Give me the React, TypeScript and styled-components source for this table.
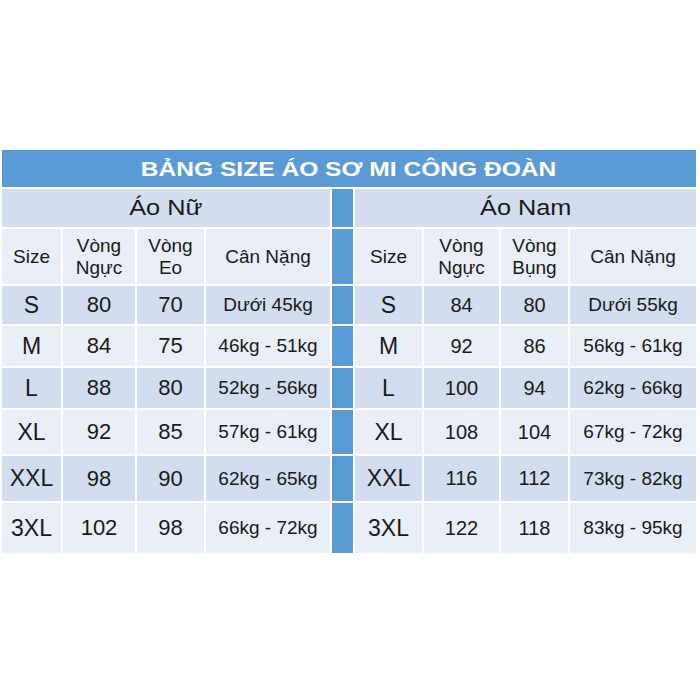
import React from 'react';
import styled, { createGlobalStyle } from 'styled-components';

type Tone = 'title' | 'dark' | 'light' | 'rule';

interface Row {
	size: string;
	chest: string;
	waist: string;
	weight: string;
}

const women: Row[] = [
	{ size: 'S', chest: '80', waist: '70', weight: 'Dưới 45kg' },
	{ size: 'M', chest: '84', waist: '75', weight: '46kg - 51kg' },
	{ size: 'L', chest: '88', waist: '80', weight: '52kg - 56kg' },
	{ size: 'XL', chest: '92', waist: '85', weight: '57kg - 61kg' },
	{ size: 'XXL', chest: '98', waist: '90', weight: '62kg - 65kg' },
	{ size: '3XL', chest: '102', waist: '98', weight: '66kg - 72kg' },
];

const men: Row[] = [
	{ size: 'S', chest: '84', waist: '80', weight: 'Dưới 55kg' },
	{ size: 'M', chest: '92', waist: '86', weight: '56kg - 61kg' },
	{ size: 'L', chest: '100', waist: '94', weight: '62kg - 66kg' },
	{ size: 'XL', chest: '108', waist: '104', weight: '67kg - 72kg' },
	{ size: 'XXL', chest: '116', waist: '112', weight: '73kg - 82kg' },
	{ size: '3XL', chest: '122', waist: '118', weight: '83kg - 95kg' },
];

export default function App() {
	return (
		<>
			<GlobalStyle />
			<Page>
				<Sheet>
					<Cell $tone='title' $span={9}>
						<TitleText>BẢNG SIZE ÁO SƠ MI CÔNG ĐOÀN</TitleText>
					</Cell>

					<Cell $tone='dark' $span={4}>
						<GroupText>Áo Nữ</GroupText>
					</Cell>
					<Cell $tone='rule' />
					<Cell $tone='dark' $span={4}>
						<GroupText>Áo Nam</GroupText>
					</Cell>

					<Cell $tone='light'><HeadText>Size</HeadText></Cell>
					<Cell $tone='light'><HeadText>Vòng<br />Ngực</HeadText></Cell>
					<Cell $tone='light'><HeadText>Vòng<br />Eo</HeadText></Cell>
					<Cell $tone='light'><HeadText>Cân Nặng</HeadText></Cell>
					<Cell $tone='rule' />
					<Cell $tone='light'><HeadText>Size</HeadText></Cell>
					<Cell $tone='light'><HeadText>Vòng<br />Ngực</HeadText></Cell>
					<Cell $tone='light'><HeadText>Vòng<br />Bụng</HeadText></Cell>
					<Cell $tone='light'><HeadText>Cân Nặng</HeadText></Cell>

					{women.map((w, i) => {
						const m = men[i];
						const tone: Tone = i % 2 === 0 ? 'dark' : 'light';
						return (
							<React.Fragment key={w.size}>
								<Cell $tone={tone}><SizeText>{w.size}</SizeText></Cell>
								<Cell $tone={tone}><NumText $size={22}>{w.chest}</NumText></Cell>
								<Cell $tone={tone}><NumText $size={22}>{w.waist}</NumText></Cell>
								<Cell $tone={tone}><WeightText>{w.weight}</WeightText></Cell>
								<Cell $tone='rule' />
								<Cell $tone={tone}><SizeText>{m.size}</SizeText></Cell>
								<Cell $tone={tone}><NumText $size={20}>{m.chest}</NumText></Cell>
								<Cell $tone={tone}><NumText $size={20}>{m.waist}</NumText></Cell>
								<Cell $tone={tone}><WeightText>{m.weight}</WeightText></Cell>
							</React.Fragment>
						);
					})}
				</Sheet>
			</Page>
		</>
	);
}

const GlobalStyle = createGlobalStyle`
	html, body {
		margin: 0;
		padding: 0;
		background: #ffffff;
	}
	body {
		font-family: 'Liberation Sans', Arial, sans-serif;
		color: #1a1a1a;
	}
`;

const Page = styled.div`
	width: 700px;
	height: 700px;
	padding: 150px 4px 0 2px;
	box-sizing: border-box;
`;

const Sheet = styled.div`
	display: grid;
	grid-template-columns: 59px 72px 67px 124px 21px 67px 75px 67px 126px;
	grid-template-rows: 37px 38px 55px 38px 40px 40px 44px 45px 50px;
	gap: 2px;
	width: 694px;
`;

const toneColor: Record<Tone, string> = {
	title: '#5b9bd5',
	rule: '#5b9bd5',
	dark: '#d2ddef',
	light: '#e9eef7',
};

const Cell = styled.div<{ $tone: Tone; $span?: number }>`
	display: flex;
	align-items: center;
	justify-content: center;
	text-align: center;
	background: ${p => toneColor[p.$tone]};
	grid-column: span ${p => p.$span ?? 1};
	overflow: hidden;
`;

const TitleText = styled.span`
	display: inline-block;
	font-weight: 700;
	font-size: 21px;
	color: #ffffff;
	white-space: nowrap;
	transform: scaleX(1.17);
`;

const GroupText = styled.span`
	display: inline-block;
	font-size: 22px;
	white-space: nowrap;
	transform: scaleX(1.15);
`;

const HeadText = styled.span`
	font-size: 19px;
	line-height: 22px;
`;

const SizeText = styled.span`
	font-size: 23px;
`;

const NumText = styled.span<{ $size: number }>`
	font-size: ${p => p.$size}px;
`;

const WeightText = styled.span`
	font-size: 19px;
	white-space: nowrap;
`;
